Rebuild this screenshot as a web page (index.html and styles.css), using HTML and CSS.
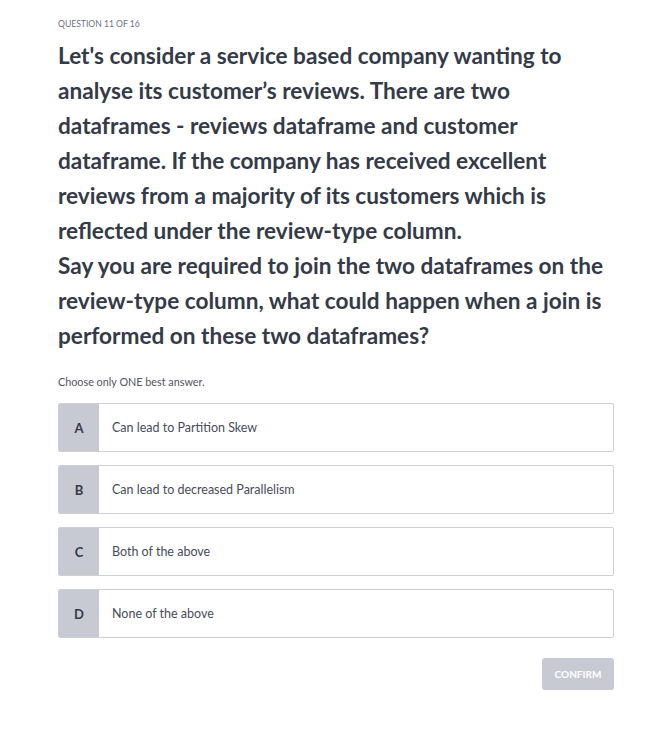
FILE: index.html
```html
<!DOCTYPE html>
<html lang="en">
<head>
<meta charset="utf-8">
<title>Question 11 of 16</title>
<link rel="stylesheet" href="styles.css">
</head>
<body>
<main class="quiz">
  <div class="progress">QUESTION 11 OF 16</div>
  <h1 class="question">Let's consider a service based company wanting to<br>analyse its customer’s reviews. There are two<br>dataframes - reviews dataframe and customer<br>dataframe. If the company has received excellent<br>reviews from a majority of its customers which is<br>reflected under the review-type column.<br>Say you are required to join the two dataframes on the<br>review-type column, what could happen when a join is<br>performed on these two dataframes?</h1>
  <p class="hint">Choose only ONE best answer.</p>
  <ul class="options">
    <li class="option"><span class="letter">A</span><span class="label">Can lead to Partition Skew</span></li>
    <li class="option"><span class="letter">B</span><span class="label">Can lead to decreased Parallelism</span></li>
    <li class="option"><span class="letter">C</span><span class="label">Both of the above</span></li>
    <li class="option"><span class="letter">D</span><span class="label">None of the above</span></li>
  </ul>
  <div class="actions"><button class="confirm" disabled>CONFIRM</button></div>
</main>
</body>
</html>
```
FILE: styles.css
```css
* { box-sizing: border-box; }
html, body { margin: 0; padding: 0; background: #fff; }
body { font-family: Lato, "Open Sans", sans-serif; color: #343a48; }
.quiz { padding: 18px 51px 0 58px; width: 665px; }
.progress { font-size: 8.6px; color: #6e7280; line-height: 12px; }
.question { margin: 8px 0 0; font-size: 22.6px; font-weight: 700; line-height: 35px; color: #343a48; white-space: nowrap; }
.hint { margin: 22px 0 0; font-size: 10.8px; color: #505563; line-height: 14px; }
.options { list-style: none; margin: 14px 0 0; padding: 0; display: flex; flex-direction: column; gap: 13px; }
.option { display: flex; height: 49px; border: 1px solid #cfd0d6; border-radius: 2px; overflow: hidden; align-items: stretch; }
.letter { width: 40px; background: #c8cad3; display: flex; align-items: center; justify-content: center; font-size: 13px; font-weight: 700; color: #343a48; }
.label { display: flex; align-items: center; padding-left: 13px; font-size: 12.5px; color: #474c5a; }
.actions { display: flex; justify-content: flex-end; margin-top: 20px; }
.confirm { width: 72px; height: 32px; border: none; border-radius: 3px; background: #c8cad3; color: #fff; font-family: inherit; font-size: 10px; font-weight: 700; padding: 0; }
```
